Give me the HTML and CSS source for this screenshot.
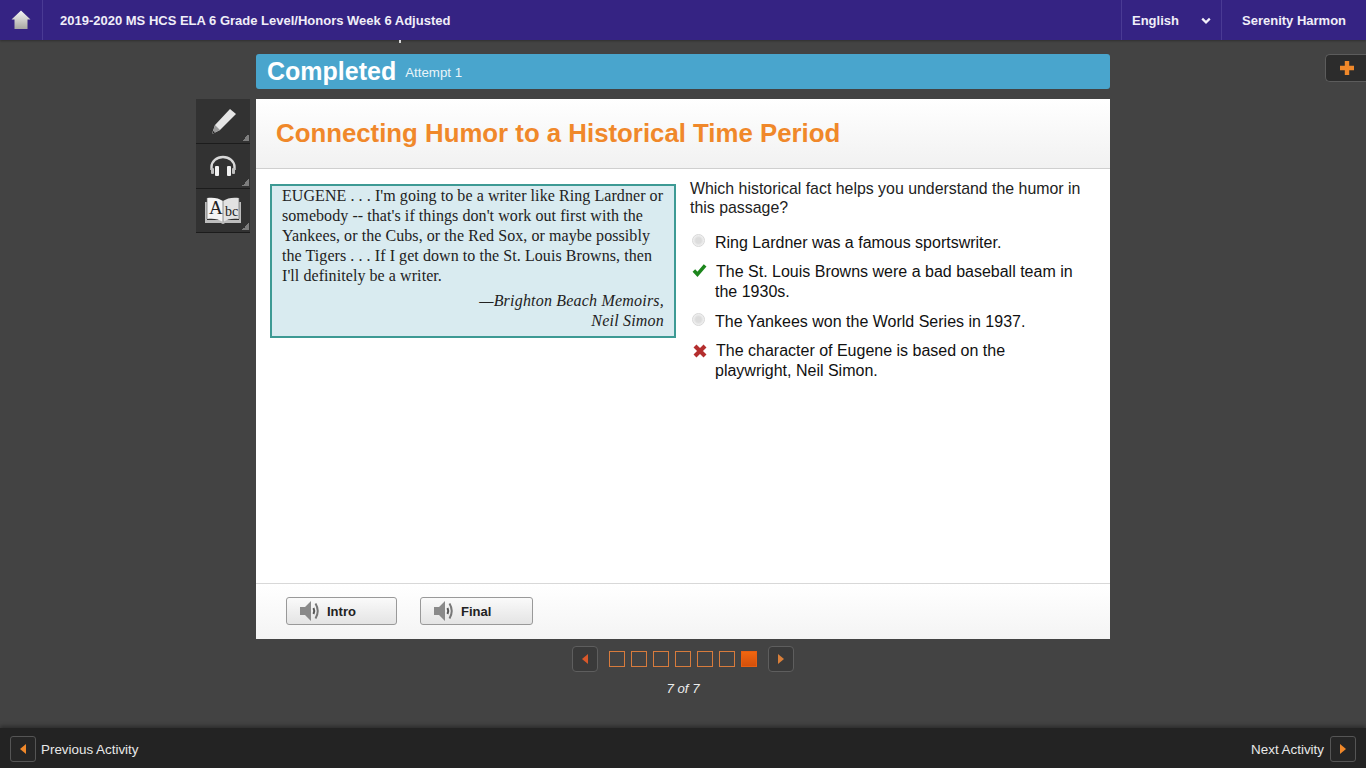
FILE: index.html
```html
<!DOCTYPE html>
<html lang="en">
<head>
<meta charset="utf-8">
<title>Connecting Humor to a Historical Time Period</title>
<link rel="stylesheet" href="styles.css">
</head>
<body>
<header class="topbar">
  <a class="home">
    <svg width="20" height="20" viewBox="0 0 20 20"><defs><linearGradient id="hg" x1="0" y1="0" x2="0" y2="1"><stop offset="0" stop-color="#f6f6f6"/><stop offset="1" stop-color="#a8a8a2"/></linearGradient></defs><path d="M10 0.5 L19.5 9.5 L16.5 9.5 L16.5 19 L3.5 19 L3.5 9.5 L0.5 9.5 Z" fill="url(#hg)"/></svg>
  </a>
  <div class="course">2019-2020 MS HCS ELA 6 Grade Level/Honors Week 6 Adjusted</div>
  <div class="lang"><span>English</span>
    <svg width="10" height="8" viewBox="0 0 10 8"><path d="M1.2 1.6 L5 5.4 L8.8 1.6" fill="none" stroke="#f2f0fa" stroke-width="2.2"/></svg>
  </div>
  <div class="user">Serenity Harmon</div>
</header>
<span class="speck"></span>
<main class="stage">
  <nav class="tools">
    <button class="tool">
      <svg width="28" height="30" viewBox="0 0 28 30"><path d="M21 3 L27 8 L11 24 L3 28 L6 19 Z" fill="#e6e6e6"/><path d="M6 19 L11 24 L3 28 Z" fill="#9a9a9a"/><path d="M4.4 25 L5.8 26.6 L3 28 Z" fill="#222"/></svg>
    </button>
    <button class="tool">
      <svg width="28" height="22" viewBox="0 0 28 22"><path d="M2.5 15 V12 A11.5 10 0 0 1 25.5 12 V15" fill="none" stroke="#d8d8d8" stroke-width="2.4"/><rect x="6" y="11" width="4" height="10" rx="1" fill="#f2f2f2"/><rect x="18" y="11" width="4" height="10" rx="1" fill="#f2f2f2"/><rect x="2" y="13" width="3" height="6" rx="1" fill="#bdbdbd"/><rect x="23" y="13" width="3" height="6" rx="1" fill="#bdbdbd"/></svg>
    </button>
    <button class="tool">
      <svg width="38" height="28" viewBox="0 0 38 28"><path d="M1 5 L3 5 L3 23 L35 23 L35 5 L37 5 L37 26 L21 26 Q19 28 17 26 L1 26 Z" fill="#bdbdbd"/><path d="M3 1 C9 0 15 1 19 4 L19 25 C15 22 9 21 3 22 Z" fill="#f4f4f4"/><path d="M35 1 C29 0 23 1 19 4 L19 25 C23 22 29 21 35 22 Z" fill="#e2e2e2"/><path d="M3 1 L3 22 M35 1 L35 22 M19 4 L19 25" stroke="#666" stroke-width=".7"/><text x="5" y="17" class="abc abc-a">A</text><text x="21" y="19" class="abc abc-b">bc</text></svg>
    </button>
  </nav>
  <div class="column">
    <div class="status"><strong>Completed</strong><span>Attempt 1</span></div>
    <section class="card">
      <div class="card-head"><h1>Connecting Humor to a Historical Time Period</h1></div>
      <div class="card-body">
        <div class="passage">
          <p>EUGENE . . . I'm going to be a writer like Ring Lardner or somebody -- that's if things don't work out first with the Yankees, or the Cubs, or the Red Sox, or maybe possibly the Tigers . . . If I get down to the St. Louis Browns, then I'll definitely be a writer.</p>
          <p class="cite">—Brighton Beach Memoirs,<br>Neil Simon</p>
        </div>
        <div class="question">
          <p class="prompt">Which historical fact helps you understand the humor in this passage?</p>
          <ul class="answers">
            <li class="answer"><span class="mark"><span class="radio"></span></span><span>Ring Lardner was a famous sportswriter.</span></li>
            <li class="answer answer-marked"><span class="mark mark-check"><svg width="15" height="14" viewBox="0 0 16 14"><path d="M2 7.5 L5.8 11.6 L14 2" fill="none" stroke="#1c861c" stroke-width="3.8"/></svg></span><span>The St. Louis Browns were a bad baseball team in the 1930s.</span></li>
            <li class="answer"><span class="mark"><span class="radio"></span></span><span>The Yankees won the World Series in 1937.</span></li>
            <li class="answer answer-marked"><span class="mark mark-cross"><svg width="16" height="14" viewBox="0 0 16 14"><path d="M3 2 L13 12 M13 2 L3 12" fill="none" stroke="#b42e2e" stroke-width="4.2"/></svg></span><span>The character of Eugene is based on the playwright, Neil Simon.</span></li>
          </ul>
        </div>
      </div>
      <div class="card-foot">
        <button class="audio audio-intro"><svg width="24" height="22" viewBox="0 0 24 22"><path d="M2 7 H7 L13 1 V21 L7 15 H2 Z" fill="#8a8a8a"/><path d="M15.5 8 Q17 11 15.5 14" fill="none" stroke="#555" stroke-width="2"/><path d="M17.5 3.5 Q22 11 17.5 18.5" fill="none" stroke="#777" stroke-width="2"/></svg><span>Intro</span></button>
        <button class="audio audio-final"><svg width="24" height="22" viewBox="0 0 24 22"><path d="M2 7 H7 L13 1 V21 L7 15 H2 Z" fill="#8a8a8a"/><path d="M15.5 8 Q17 11 15.5 14" fill="none" stroke="#555" stroke-width="2"/><path d="M17.5 3.5 Q22 11 17.5 18.5" fill="none" stroke="#777" stroke-width="2"/></svg><span>Final</span></button>
      </div>
    </section>
    <div class="pager">
      <button class="pg-btn"><svg width="8" height="12" viewBox="0 0 8 12"><path d="M7 1 L1 6 L7 11 Z" fill="#d9582a"/></svg></button>
      <div class="pips"><i></i><i></i><i></i><i></i><i></i><i></i><i class="on"></i></div>
      <button class="pg-btn"><svg width="8" height="12" viewBox="0 0 8 12"><path d="M1 1 L7 6 L1 11 Z" fill="#d97f3a"/></svg></button>
    </div>
    <div class="count">7 of 7</div>
  </div>
  <button class="plus"><svg width="16" height="16" viewBox="0 0 16 16"><path d="M8 1 V15 M1 8 H15" stroke="#f0882a" stroke-width="4.4"/></svg></button>
</main>
<footer class="bottombar">
  <a class="activity"><span class="act-btn"><svg width="8" height="12" viewBox="0 0 8 12"><path d="M7 1 L1 6 L7 11 Z" fill="#f0882a"/></svg></span><span>Previous Activity</span></a>
  <a class="activity activity-next"><span>Next Activity</span><span class="act-btn"><svg width="8" height="12" viewBox="0 0 8 12"><path d="M1 1 L7 6 L1 11 Z" fill="#f0882a"/></svg></span></a>
</footer>
</body>
</html>
```
FILE: styles.css
```css
* { box-sizing: border-box; }
html, body { height: 100%; }
body {
  margin: 0;
  height: 768px;
  overflow: hidden;
  display: flex;
  flex-direction: column;
  background: #434343;
  font-family: "Liberation Sans", Arial, sans-serif;
  position: relative;
}
button { font: inherit; padding: 0; cursor: pointer; }

.topbar {
  flex: none;
  height: 40px;
  display: flex;
  align-items: stretch;
  background: #352383;
  color: #f0eef8;
  font-size: 13px;
  font-weight: 700;
  line-height: 41px;
  box-shadow: 0 1px 2px rgba(0,0,0,.3);
}
.home {
  width: 43px;
  display: flex;
  align-items: center;
  justify-content: center;
  border-right: 1px solid #4a3a94;
}
.course { flex: 1; padding-left: 17px; }
.lang {
  width: 101px;
  display: flex;
  align-items: center;
  justify-content: space-between;
  padding: 1px 10px 0;
  border-left: 1px solid #4a3a94;
  border-right: 1px solid #4a3a94;
}
.user { width: 144px; padding-left: 20px; }
.speck {
  position: absolute;
  left: 399px;
  top: 40px;
  width: 2px;
  height: 3px;
  background: #d8d8d8;
}

.stage {
  flex: 1;
  display: flex;
  align-items: flex-start;
  padding: 14px 0 0 196px;
  gap: 6px;
  position: relative;
}
.tools {
  width: 54px;
  margin-top: 45px;
  display: flex;
  flex-direction: column;
}
.tool {
  height: 45px;
  border: 0;
  border-bottom: 1px solid #1c1c1c;
  background:
    linear-gradient(135deg, transparent 50%, #7d7d7d 50%) no-repeat right 1px bottom 2px / 7px 7px,
    #323232;
  display: flex;
  align-items: center;
  justify-content: center;
}
.tool:last-child { height: 44px; }
.abc { font-family: "Liberation Serif", serif; fill: #222; }
.abc-a { font-size: 19px; }
.abc-b { font-size: 14px; }

.column { width: 854px; }
.status {
  height: 35px;
  background: #49a5cd;
  border-radius: 3px;
  display: flex;
  align-items: center;
  gap: 9px;
  padding-left: 11px;
  color: #fff;
}
.status strong { font-size: 25px; }
.status span { font-size: 13.3px; color: #e8f4f9; padding-top: 2px; }

.card {
  margin-top: 10px;
  height: 540px;
  background: #fff;
  display: flex;
  flex-direction: column;
}
.card-head {
  flex: none;
  height: 70px;
  padding: 18px 20px 0;
  background: linear-gradient(#fff, #f1f1f1);
  border-bottom: 1px solid #cfcfcf;
}
h1 {
  margin: 0;
  font-size: 25.8px;
  line-height: 32px;
  color: #f0882a;
  font-weight: 700;
}
.card-body {
  flex: 1;
  display: flex;
  align-items: flex-start;
  gap: 14px;
  padding: 15px 14px 0;
}
.passage {
  flex: none;
  width: 406px;
  height: 154px;
  padding: 0 10px;
  background: #d9ebf0;
  border: 2px solid #3d9a94;
  font-family: "Liberation Serif", serif;
  font-size: 16px;
  letter-spacing: .07px;
  line-height: 20px;
  color: #222;
}
.passage p { margin: 0; }
.passage .cite { margin-top: 5px; text-align: right; font-style: italic; letter-spacing: .2px; }
.question { flex: 1; color: #111; font-size: 16px; line-height: 20px; padding-right: 10px; }
.prompt { margin: -5px 0 0; font-size: 15.9px; line-height: 19px; color: #222; }
.answers { list-style: none; margin: 16px 0 0; padding: 0; display: flex; flex-direction: column; gap: 9.4px; }
.answer { display: flex; padding-right: 8px; }
.answer-marked { text-indent: 1px; }
.mark { flex: none; width: 25px; display: flex; padding: 1px 0 0 2px; height: 18px; align-items: flex-start; }
.mark-check { padding: 1px 0 0 2px; }
.mark-cross { padding: 3px 0 0 2px; }
.radio {
  width: 13px;
  height: 13px;
  border-radius: 50%;
  border: 1px solid #d8d8d8;
  background: radial-gradient(#dcdcdc 35%, #f4f4f4 75%);
}

.card-foot {
  flex: none;
  height: 56px;
  padding: 13px 30px 0;
  display: flex;
  align-items: flex-start;
  gap: 23px;
  border-top: 1px solid #d8d8d8;
  background: linear-gradient(#fff, #f4f4f4);
}
.audio {
  height: 28px;
  display: flex;
  align-items: center;
  gap: 5px;
  padding-left: 11px;
  border: 1px solid #999;
  border-radius: 3px;
  background: linear-gradient(#fafafa, #e4e4e4);
  font-size: 13px;
  font-weight: 700;
  color: #222;
}
.audio span { padding-top: 1px; }
.audio-intro { width: 111px; }
.audio-final { width: 113px; }

.pager {
  margin-top: 7px;
  display: flex;
  justify-content: center;
  align-items: center;
  gap: 11px;
}
.pg-btn {
  width: 26px;
  height: 26px;
  border: 1px solid #5e5e5e;
  border-radius: 4px;
  background: #3a3a3a;
  display: flex;
  align-items: center;
  justify-content: center;
}
.pips { display: flex; gap: 6px; }
.pips i { width: 16px; height: 16px; border: 1px solid #d87b3c; }
.pips i.on { background: linear-gradient(#f0660f, #d4500c); border-color: #e85e10; }
.count {
  margin-top: 9px;
  text-align: center;
  font-size: 13.2px;
  line-height: 16px;
  font-style: italic;
  color: #eee;
}
.plus {
  position: absolute;
  right: 0;
  top: 14px;
  width: 41px;
  height: 28px;
  padding-left: 2px;
  border: 1px solid #5c5c5c;
  border-right: 0;
  border-radius: 5px 0 0 5px;
  background: #2c2c2c;
  display: flex;
  align-items: center;
  justify-content: center;
}

.bottombar {
  flex: none;
  height: 40px;
  display: flex;
  justify-content: space-between;
  align-items: center;
  padding: 2px 10px 0;
  background: #232323;
  box-shadow: 0 -2px 4px rgba(0,0,0,.35);
  color: #e8e8e8;
  font-size: 13.4px;
}
.activity { display: flex; align-items: center; gap: 5px; }
.activity-next { gap: 6px; }
.act-btn {
  width: 26px;
  height: 26px;
  border: 1px solid #555;
  border-radius: 3px;
  background: #262626;
  display: flex;
  align-items: center;
  justify-content: center;
}
```
